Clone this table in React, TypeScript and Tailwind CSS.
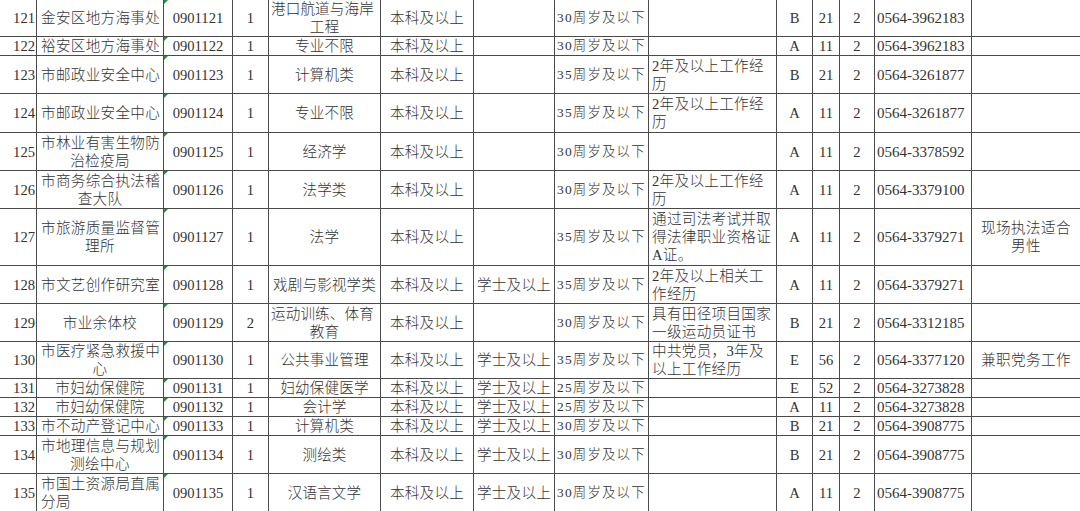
import React from "react";

type Row = {
  no: string;
  unit: string;
  unitLeft?: boolean;
  code: string;
  num: string;
  major: string;
  edu: string;
  degree: string;
  age: string;
  other: string;
  cat: string;
  cc: string;
  n2: string;
  phone: string;
  note: string;
  h: string;
};

const rows: Row[] = [
  { no: "121", unit: "金安区地方海事处", code: "0901121", num: "1", major: "港口航道与海岸/工程", edu: "本科及以上", degree: "", age: "30周岁及以下", other: "", cat: "B", cc: "21", n2: "2", phone: "0564-3962183", note: "", h: "h-[37px]" },
  { no: "122", unit: "裕安区地方海事处", code: "0901122", num: "1", major: "专业不限", edu: "本科及以上", degree: "", age: "30周岁及以下", other: "", cat: "A", cc: "11", n2: "2", phone: "0564-3962183", note: "", h: "h-[19px]" },
  { no: "123", unit: "市邮政业安全中心", code: "0901123", num: "1", major: "计算机类", edu: "本科及以上", degree: "", age: "35周岁及以下", other: "2年及以上工作经/历", cat: "B", cc: "21", n2: "2", phone: "0564-3261877", note: "", h: "h-[38px]" },
  { no: "124", unit: "市邮政业安全中心", code: "0901124", num: "1", major: "专业不限", edu: "本科及以上", degree: "", age: "35周岁及以下", other: "2年及以上工作经/历", cat: "A", cc: "11", n2: "2", phone: "0564-3261877", note: "", h: "h-[39px]" },
  { no: "125", unit: "市林业有害生物防/治检疫局", code: "0901125", num: "1", major: "经济学", edu: "本科及以上", degree: "", age: "30周岁及以下", other: "", cat: "A", cc: "11", n2: "2", phone: "0564-3378592", note: "", h: "h-[38px]" },
  { no: "126", unit: "市商务综合执法稽/查大队", code: "0901126", num: "1", major: "法学类", edu: "本科及以上", degree: "", age: "30周岁及以下", other: "2年及以上工作经/历", cat: "A", cc: "11", n2: "2", phone: "0564-3379100", note: "", h: "h-[38px]" },
  { no: "127", unit: "市旅游质量监督管/理所", code: "0901127", num: "1", major: "法学", edu: "本科及以上", degree: "", age: "35周岁及以下", other: "通过司法考试并取/得法律职业资格证/A证。", cat: "A", cc: "11", n2: "2", phone: "0564-3379271", note: "现场执法适合/男性", h: "h-[57px]" },
  { no: "128", unit: "市文艺创作研究室", code: "0901128", num: "1", major: "戏剧与影视学类", edu: "本科及以上", degree: "学士及以上", age: "35周岁及以下", other: "2年及以上相关工/作经历", cat: "A", cc: "11", n2: "2", phone: "0564-3379271", note: "", h: "h-[38px]" },
  { no: "129", unit: "市业余体校", code: "0901129", num: "2", major: "运动训练、体育/教育", edu: "本科及以上", degree: "", age: "30周岁及以下", other: "具有田径项目国家/一级运动员证书", cat: "B", cc: "21", n2: "2", phone: "0564-3312185", note: "", h: "h-[38px]" },
  { no: "130", unit: "市医疗紧急救援中/心", code: "0901130", num: "1", major: "公共事业管理", edu: "本科及以上", degree: "学士及以上", age: "35周岁及以下", other: "中共党员，3年及/以上工作经历", cat: "E", cc: "56", n2: "2", phone: "0564-3377120", note: "兼职党务工作", h: "h-[37px]" },
  { no: "131", unit: "市妇幼保健院", code: "0901131", num: "1", major: "妇幼保健医学", edu: "本科及以上", degree: "学士及以上", age: "25周岁及以下", other: "", cat: "E", cc: "52", n2: "2", phone: "0564-3273828", note: "", h: "h-[19px]" },
  { no: "132", unit: "市妇幼保健院", code: "0901132", num: "1", major: "会计学", edu: "本科及以上", degree: "学士及以上", age: "25周岁及以下", other: "", cat: "A", cc: "11", n2: "2", phone: "0564-3273828", note: "", h: "h-[19px]" },
  { no: "133", unit: "市不动产登记中心", code: "0901133", num: "1", major: "计算机类", edu: "本科及以上", degree: "学士及以上", age: "30周岁及以下", other: "", cat: "B", cc: "21", n2: "2", phone: "0564-3908775", note: "", h: "h-[18px]" },
  { no: "134", unit: "市地理信息与规划/测绘中心", code: "0901134", num: "1", major: "测绘类", edu: "本科及以上", degree: "学士及以上", age: "30周岁及以下", other: "", cat: "B", cc: "21", n2: "2", phone: "0564-3908775", note: "", h: "h-[38px]" },
  { no: "135", unit: "市国土资源局直属/分局", unitLeft: true, code: "0901135", num: "1", major: "汉语言文学", edu: "本科及以上", degree: "学士及以上", age: "30周岁及以下", other: "", cat: "A", cc: "11", n2: "2", phone: "0564-3908775", note: "", h: "h-[38px]" },
];

// first line of a wrapped cell fills the width; the rest follow the cell alignment
function Lines({ text, rest }: { text: string; rest: string }) {
  const parts = text.split("/");
  return (
    <>
      {parts.map((p, i) => (
        <div key={i} className={i === 0 && parts.length > 1 ? "text-left whitespace-nowrap" : rest + " whitespace-nowrap"}>
          {p}
        </div>
      ))}
    </>
  );
}

const cell = "border border-[#4a4a4a] p-0 align-middle leading-[18px] overflow-hidden";

export default function App() {
  return (
    <div
      className="w-[1080px] h-[511px] overflow-hidden bg-white text-[#333] text-[14.6px] font-light"
      style={{ fontFamily: '"Liberation Serif", "Noto Sans CJK SC", serif' }}
    >
      <table className="table-fixed border-collapse w-[1081px] -mt-px -ml-px">
        <colgroup>
          <col className="w-[37px]" />
          <col className="w-[127px]" />
          <col className="w-[69px]" />
          <col className="w-[36px]" />
          <col className="w-[112px]" />
          <col className="w-[93px]" />
          <col className="w-[81px]" />
          <col className="w-[94px]" />
          <col className="w-[128px]" />
          <col className="w-[36px]" />
          <col className="w-[27px]" />
          <col className="w-[35px]" />
          <col className="w-[97px]" />
          <col className="w-[109px]" />
        </colgroup>
        <tbody>
          {rows.map((r) => (
            <tr key={r.no} className={r.h}>
              <td className={cell + " text-right pr-px"}>{r.no}</td>
              <td className={cell + " px-[4px] tracking-[0.3px]"}>
                <Lines text={r.unit} rest={r.unitLeft ? "text-left" : "text-center"} />
              </td>
              <td className={cell + " text-center relative"}>
                <div className="absolute top-0 left-0 w-0 h-0 border-t-[4px] border-r-[4px] border-t-[#2f8a3c] border-r-transparent" />
                {r.code}
              </td>
              <td className={cell + " text-center"}>{r.num}</td>
              <td className={cell + " px-[2px] tracking-[0.1px]"}>
                <Lines text={r.major} rest="text-center" />
              </td>
              <td className={cell + " text-center tracking-[0.2px]"}>{r.edu}</td>
              <td className={cell + " text-left pl-[3px] tracking-[0.2px]"}>{r.degree}</td>
              <td className={cell + " text-left pl-[2px] text-[13.4px] tracking-[1.2px] whitespace-nowrap"}>{r.age}</td>
              <td className={cell + " text-left pl-[3px] tracking-[0.3px]"}>
                {r.other.split("/").map((p, i) => (
                  <div key={i} className="whitespace-nowrap">{p}</div>
                ))}
              </td>
              <td className={cell + " text-center"}>{r.cat}</td>
              <td className={cell + " text-center"}>{r.cc}</td>
              <td className={cell + " text-center"}>{r.n2}</td>
              <td className={cell + " text-left pl-[2px] text-[15px]"}>{r.phone}</td>
              <td className={cell + " text-center tracking-[0.4px]"}>
                {r.note.split("/").map((p, i) => (
                  <div key={i} className="whitespace-nowrap">{p}</div>
                ))}
              </td>
            </tr>
          ))}
        </tbody>
      </table>
    </div>
  );
}
